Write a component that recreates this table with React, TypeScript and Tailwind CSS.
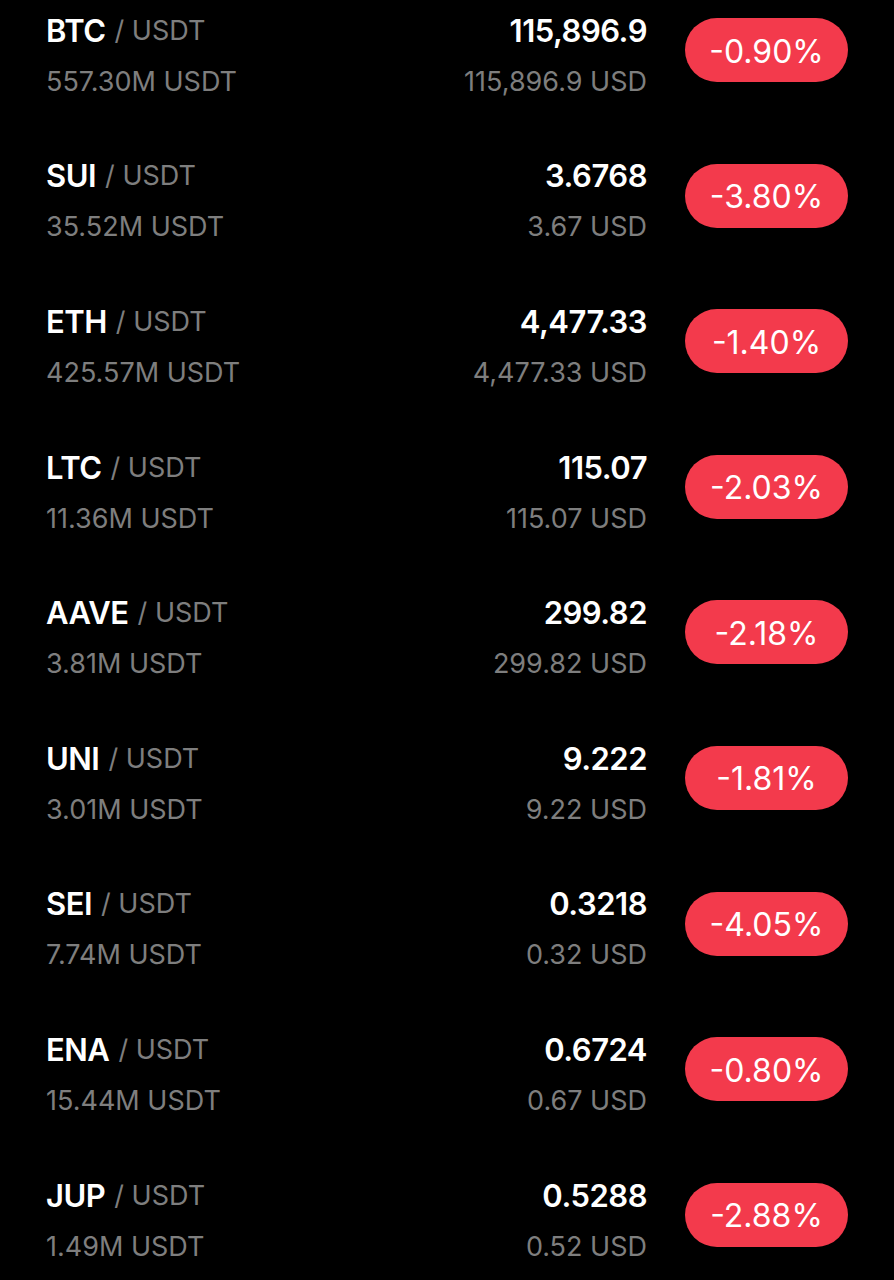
import React from "react";

const rows = [
  ["BTC", "557.30M USDT", "115,896.9", "115,896.9 USD", "-0.90%"],
  ["SUI", "35.52M USDT", "3.6768", "3.67 USD", "-3.80%"],
  ["ETH", "425.57M USDT", "4,477.33", "4,477.33 USD", "-1.40%"],
  ["LTC", "11.36M USDT", "115.07", "115.07 USD", "-2.03%"],
  ["AAVE", "3.81M USDT", "299.82", "299.82 USD", "-2.18%"],
  ["UNI", "3.01M USDT", "9.222", "9.22 USD", "-1.81%"],
  ["SEI", "7.74M USDT", "0.3218", "0.32 USD", "-4.05%"],
  ["ENA", "15.44M USDT", "0.6724", "0.67 USD", "-0.80%"],
  ["JUP", "1.49M USDT", "0.5288", "0.52 USD", "-2.88%"],
];

export default function App() {
  return (
    <div
      className="w-[894px] h-[1280px] overflow-hidden bg-black pt-[11px]"
      style={{ fontFamily: "Inter, 'Noto Sans', sans-serif" }}
    >
      {rows.map(([sym, vol, price, usd, chg]) => (
        <div key={sym} className="h-[145.6px] flex items-start px-[46px]">
          <div className="flex-1 flex flex-col gap-[11px]">
            <div className="h-[40px] flex items-center">
              <span className="text-[31px] font-semibold text-white tracking-[-0.5px]">{sym}</span>
              <span className="text-[27px] text-[#7e7e7e] ml-[9px]">/ USDT</span>
            </div>
            <div className="h-[40px] flex items-center text-[27px] text-[#7e7e7e]">{vol}</div>
          </div>
          <div className="flex flex-col items-end gap-[11px]">
            <div className="h-[40px] flex items-center text-[31px] font-semibold text-white tracking-[-0.5px]">{price}</div>
            <div className="h-[40px] flex items-center text-[27px] text-[#7e7e7e]">{usd}</div>
          </div>
          <div className="ml-[38px] mt-[7px] w-[163px] h-[64px] pt-[3px] rounded-full bg-[#f33a4c] flex items-center justify-center text-white text-[32px]">
            {chg}
          </div>
        </div>
      ))}
    </div>
  );
}
